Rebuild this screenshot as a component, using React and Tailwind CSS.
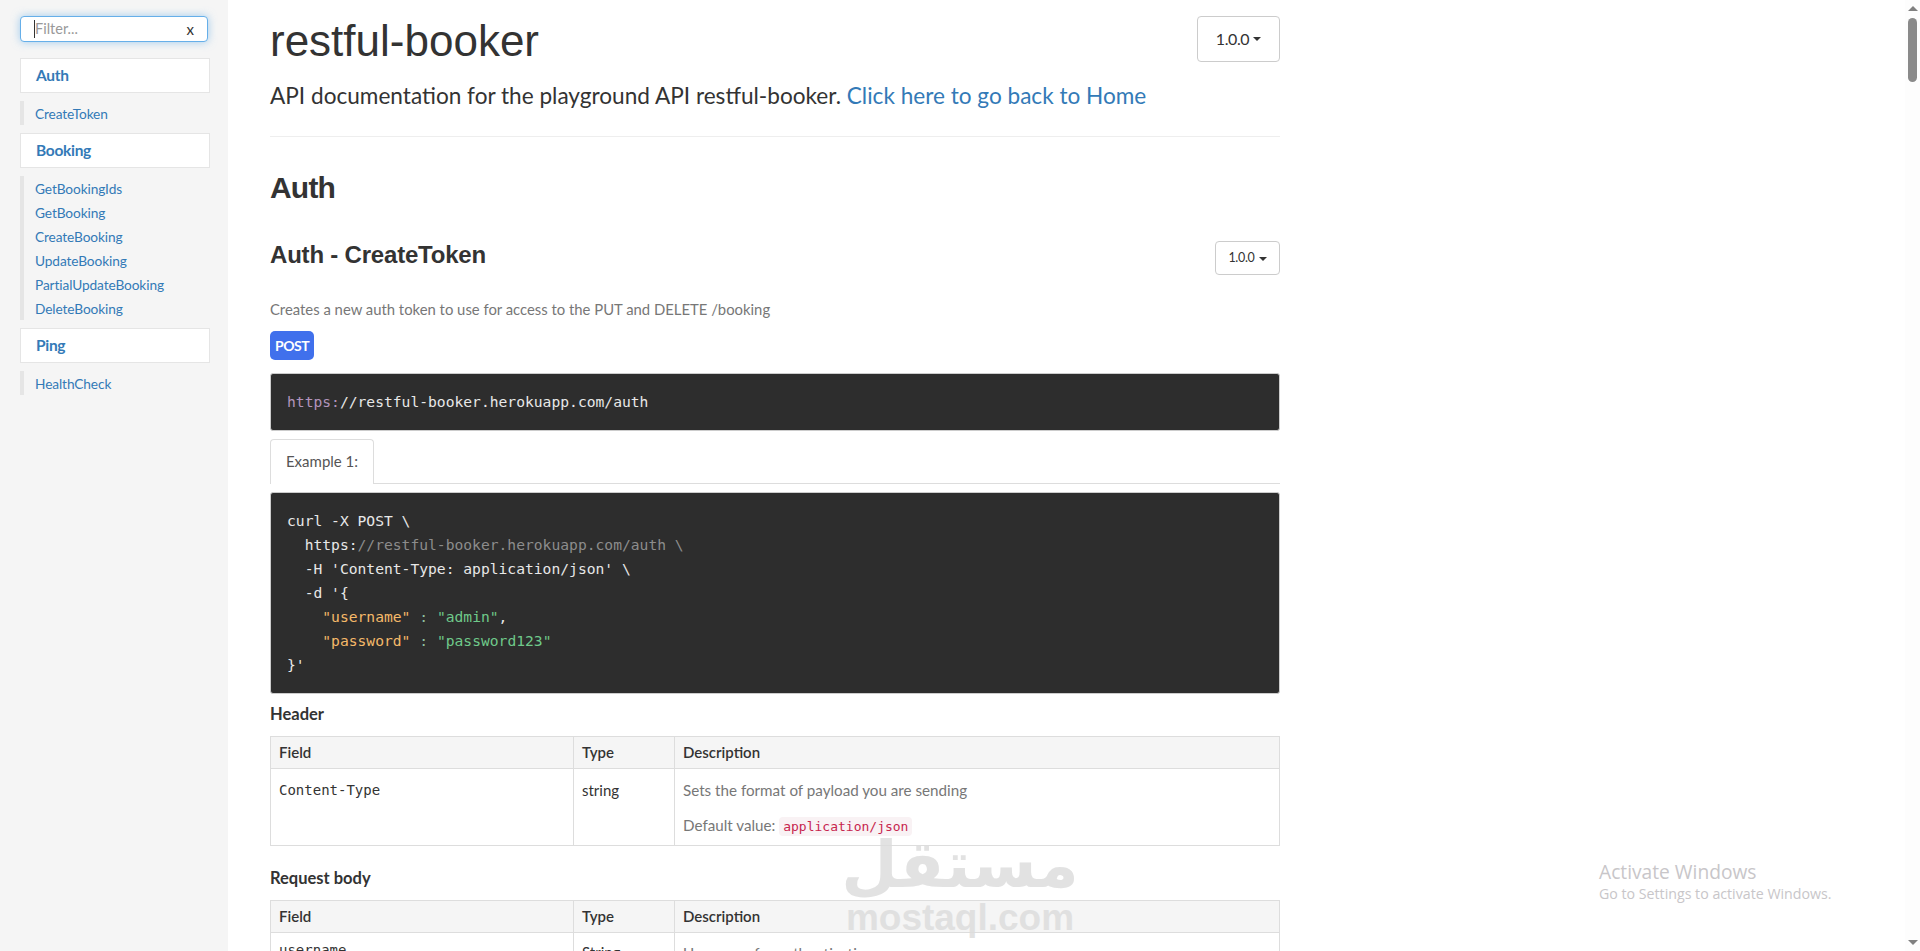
const navGroups = [
  { title: "Auth", links: ["CreateToken"] },
  {
    title: "Booking",
    links: ["GetBookingIds", "GetBooking", "CreateBooking", "UpdateBooking", "PartialUpdateBooking", "DeleteBooking"],
  },
  { title: "Ping", links: ["HealthCheck"] },
];

const Sidebar = () => (
  <aside className="w-[228px] shrink-0 bg-[#f5f5f5] pt-4 pl-5 pr-[18px]">
    <div className="flex h-[26px] w-[188px] items-center justify-between rounded border border-[#66afe9] bg-white pl-[13px] pr-[13px] shadow-[0_0_8px_rgba(102,175,233,0.6)]">
      <span className="border-l border-[#333] text-[14.5px] leading-[18px] text-[#999]">Filter...</span>
      <span className="text-[15px] leading-none text-[#333]">x</span>
    </div>
    <div className="mt-4">
      {navGroups.map((group) => (
        <div key={group.title} className="mb-2">
          <div className="flex h-[35px] w-[190px] items-center border border-[#e5e5e5] bg-white pl-[15px] pt-px text-[15.5px] font-bold tracking-[-0.3px] text-[#337ab7]">
            {group.title}
          </div>
          <ul className="mt-2 border-l-4 border-[#e5e5e5] pl-[11px]">
            {group.links.map((link) => (
              <li key={link} className="h-6 text-[13.7px] leading-[25px] tracking-[-0.1px] text-[#337ab7]">
                {link}
              </li>
            ))}
          </ul>
        </div>
      ))}
    </div>
  </aside>
);

const VersionButton = ({ small }) => (
  <div
    className={
      small
        ? "flex h-[34px] w-[65px] items-center justify-center gap-1 rounded border border-[#ccc] pt-px text-[12.5px] tracking-[-0.3px] text-[#333]"
        : "flex h-[46px] w-[83px] items-center justify-center gap-1 rounded border border-[#ccc] text-[16px] tracking-[-0.4px] text-[#333]"
    }
  >
    1.0.0
    <span className="h-0 w-0 border-x-4 border-t-4 border-x-transparent border-t-[#333]" />
  </div>
);

const FieldTable = ({ children }) => (
  <table className="w-full table-fixed border-collapse text-[15px]">
    <colgroup>
      <col className="w-[303px]" />
      <col className="w-[101px]" />
      <col />
    </colgroup>
    <thead>
      <tr className="h-[32px] bg-[#f5f5f5] text-left font-semibold text-[#333]">
        <th className="border border-[#ddd] px-2 font-semibold">Field</th>
        <th className="border border-[#ddd] px-2 font-semibold">Type</th>
        <th className="border border-[#ddd] px-2 font-semibold">Description</th>
      </tr>
    </thead>
    <tbody>{children}</tbody>
  </table>
);

const Watermark = () => (
  <div className="pointer-events-none absolute left-[843px] top-[836px] flex w-[234px] flex-col items-center text-[#dcdcdc] opacity-80">
    <span className="text-[65px] font-bold leading-[58px] [font-family:'DejaVu_Sans',sans-serif]">مستقل</span>
    <span className="mt-1 text-[37px] font-bold leading-10 [font-family:'Liberation_Sans',sans-serif]">mostaql.com</span>
  </div>
);

const ScrollBar = () => (
  <div className="flex w-[15px] shrink-0 flex-col items-center bg-[#fdfdfd] pt-[6px]">
    <span className="h-0 w-0 border-x-[5px] border-b-[5px] border-x-transparent border-b-[#808080]" />
    <span className="mt-[7px] h-[64px] w-[9px] rounded-full bg-[#8a8a8a]" />
    <span className="mt-auto mb-[6px] h-0 w-0 border-x-[5px] border-t-[5px] border-x-transparent border-t-[#808080]" />
  </div>
);

export default function App() {
  return (
    <div className="relative flex h-[951px] overflow-hidden bg-white text-[#333] [font-family:'Lato',sans-serif]">
      <Sidebar />
      <main className="ml-[42px] w-[1010px] shrink-0">
        <div className="flex items-start justify-between pt-4">
          <h1 className="text-[44px] leading-[50px] [font-family:'Liberation_Sans',sans-serif]">restful-booker</h1>
          <VersionButton />
        </div>
        <p className="mt-[14px] text-[22.6px] leading-8">
          API documentation for the playground API restful-booker.{" "}
          <a className="text-[#337ab7]">Click here to go back to Home</a>
        </p>
        <hr className="mt-6 border-[#eee]" />
        <h2 className="mt-[31px] text-[30px] font-bold leading-[40px] tracking-[-0.8px] [font-family:'Liberation_Sans',sans-serif]">Auth</h2>
        <div className="mt-[33px] flex items-start justify-between">
          <h3 className="text-[24px] font-bold leading-[28px] tracking-[-0.2px] [font-family:'Liberation_Sans',sans-serif]">Auth - CreateToken</h3>
          <VersionButton small />
        </div>
        <p className="mt-[24px] text-[14.85px] leading-5 text-[#777]">
          Creates a new auth token to use for access to the PUT and DELETE /booking
        </p>
        <span className="mt-[12px] flex h-[29px] w-[44px] items-center justify-center rounded-[5px] bg-[#4070ec] text-[14px] font-bold tracking-[-0.5px] text-white">
          POST
        </span>
        <pre className="mt-[13px] flex h-[58px] items-center rounded-[3px] border border-[#ccc] bg-[#2d2d2d] px-4 text-[14.65px] text-[#e8e8e8] [font-family:'DejaVu_Sans_Mono',monospace]">
          <span className="text-[#b294bb]">https:</span>//restful-booker.herokuapp.com/auth
        </pre>
        <div className="mt-2 h-[45px] border-b border-[#ddd]">
          <div className="flex h-[45px] w-[104px] items-center justify-center rounded-t border border-b-0 border-[#ddd] bg-white pb-px text-[15px] text-[#555]">
            Example 1:
          </div>
        </div>
        <pre className="mt-2 h-[202px] rounded-[3px] border border-[#ccc] bg-[#2d2d2d] px-4 py-4 text-[14.65px] leading-6 text-[#e8e8e8] [font-family:'DejaVu_Sans_Mono',monospace]">
          {"curl -X POST \\\n  https:"}
          <span className="text-[#8c8c8c]">{"//restful-booker.herokuapp.com/auth \\"}</span>
          {"\n  -H 'Content-Type: application/json' \\\n  -d '{\n    "}
          <span className="text-[#f5b969]">"username"</span>
          <span className="text-[#8fbf9f]"> : </span>
          <span className="text-[#6fc98a]">"admin"</span>
          {",\n    "}
          <span className="text-[#f5b969]">"password"</span>
          <span className="text-[#8fbf9f]"> : </span>
          <span className="text-[#6fc98a]">"password123"</span>
          {"\n}'"}
        </pre>
        <h4 className="mt-[10px] text-[16.5px] font-bold leading-5">Header</h4>
        <div className="mt-3">
          <FieldTable>
            <tr className="h-[77px] align-top">
              <td className="border border-[#ddd] px-2 pt-[11px] text-[14px] [font-family:'DejaVu_Sans_Mono',monospace]">Content-Type</td>
              <td className="border border-[#ddd] px-2 pt-[10px]">string</td>
              <td className="border border-[#ddd] px-2 pt-[10px] text-[15.2px] text-[#777]">
                <p>Sets the format of payload you are sending</p>
                <p className="mt-[12px]">
                  Default value:{" "}
                  <code className="rounded bg-[#f9f2f4] px-1 py-[2px] text-[13px] text-[#c7254e] [font-family:'DejaVu_Sans_Mono',monospace]">
                    application/json
                  </code>
                </p>
              </td>
            </tr>
          </FieldTable>
        </div>
        <h4 className="mt-[22px] text-[16.5px] font-bold leading-5">Request body</h4>
        <div className="mt-3">
          <FieldTable>
            <tr className="h-[77px] align-top">
              <td className="border border-[#ddd] px-2 pt-[7px] text-[14px] [font-family:'DejaVu_Sans_Mono',monospace]">username</td>
              <td className="border border-[#ddd] px-2 pt-[8px]">String</td>
              <td className="border border-[#ddd] px-2 pt-[9px] text-[15.2px] text-[#777]">Username for authentication</td>
            </tr>
          </FieldTable>
        </div>
      </main>
      <div className="ml-auto flex items-stretch">
        <ScrollBar />
      </div>
      <Watermark />
      <div className="absolute left-[1599px] top-[860px] text-[#c8c6c9] [font-family:'Open_Sans',sans-serif]">
        <p className="text-[19.2px] leading-6">Activate Windows</p>
        <p className="text-[14.2px] leading-5">Go to Settings to activate Windows.</p>
      </div>
    </div>
  );
}
